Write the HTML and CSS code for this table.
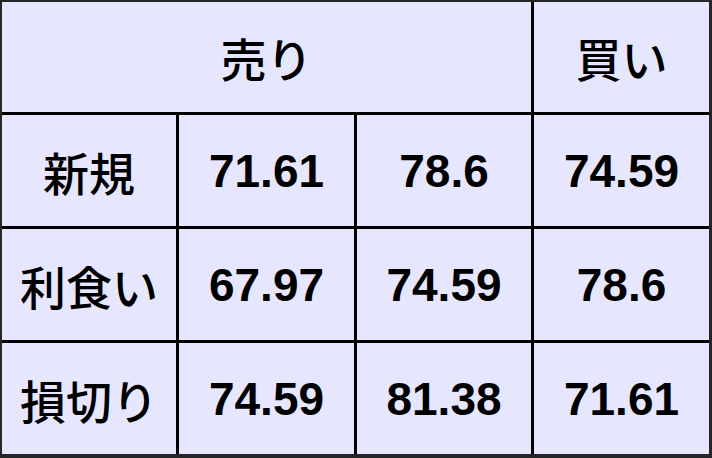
FILE: index.html
```html
<!DOCTYPE html>
<html lang="ja">
<head>
<meta charset="utf-8">
<link rel="stylesheet" href="styles.css">
</head>
<body>
<div class="grid">
  <div class="cell head span3">売り</div>
  <div class="cell head">買い</div>
  <div class="cell label">新規</div>
  <div class="cell num">71.61</div>
  <div class="cell num">78.6</div>
  <div class="cell num">74.59</div>
  <div class="cell label">利食い</div>
  <div class="cell num">67.97</div>
  <div class="cell num">74.59</div>
  <div class="cell num">78.6</div>
  <div class="cell label">損切り</div>
  <div class="cell num">74.59</div>
  <div class="cell num">81.38</div>
  <div class="cell num">71.61</div>
</div>
</body>
</html>
```
FILE: styles.css
```css
html, body {
  margin: 0;
  padding: 0;
  background: #e6e6ff;
}
.grid {
  width: 712px;
  height: 458px;
  box-sizing: border-box;
  display: grid;
  grid-template-columns: 174px 175px 174px 175px;
  grid-template-rows: 110px 111px 111px 111px;
  gap: 3px;
  background: #000;
  border-style: solid;
  border-color: #262626;
  border-width: 2px 3px 4px 2px;
}
.cell {
  background: #e6e6ff;
  display: flex;
  align-items: center;
  justify-content: center;
  color: #000;
}
.span3 {
  grid-column: span 3;
}
.head, .label {
  font-family: "Noto Sans CJK JP", sans-serif;
  font-size: 46px;
  font-weight: 500;
}
.num {
  font-family: "Liberation Sans", Arial, sans-serif;
  font-size: 46px;
  font-weight: bold;
}
```
